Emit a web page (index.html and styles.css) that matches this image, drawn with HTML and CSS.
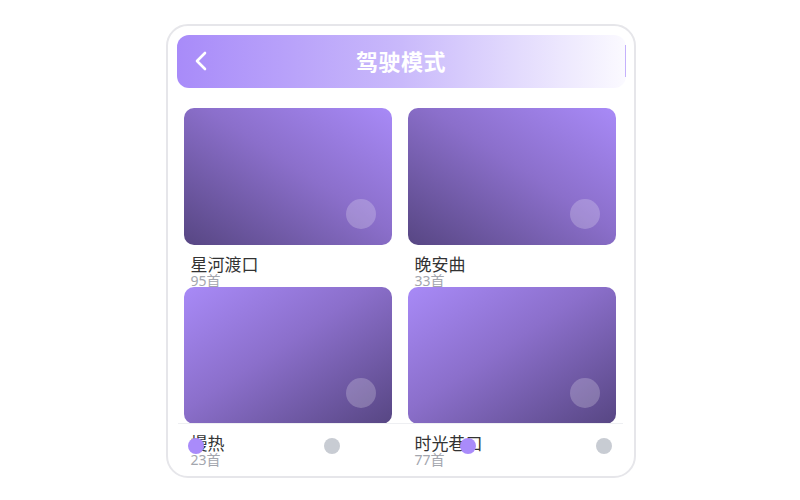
FILE: index.html
```html
<!DOCTYPE html>
<html lang="zh-CN">
<head>
  <meta charset="UTF-8">
  <meta name="viewport" content="width=device-width, initial-scale=1.0">
  <title>驾驶模式</title>
  <link rel="stylesheet" href="styles.css">
</head>
<body>
  <div class="phone">
    <div class="header">
      <span class="back">
        <svg width="14" height="22" viewBox="0 0 14 22"><path d="M11 3 L3 11 L11 19" fill="none" stroke="#fff" stroke-width="2.6" stroke-linecap="round" stroke-linejoin="round"/></svg>
      </span>
      <h1>驾驶模式</h1>
    </div>

    <div class="grid">
      <div class="item">
        <div class="cover cover-up"><span class="play"></span></div>
        <p class="name">星河渡口</p>
        <p class="count">95首</p>
      </div>
      <div class="item">
        <div class="cover cover-up"><span class="play"></span></div>
        <p class="name">晚安曲</p>
        <p class="count">33首</p>
      </div>
      <div class="item">
        <div class="cover cover-down"><span class="play"></span></div>
        <p class="name">慢热</p>
        <p class="count">23首</p>
      </div>
      <div class="item">
        <div class="cover cover-down"><span class="play"></span></div>
        <p class="name">时光巷口</p>
        <p class="count">77首</p>
      </div>
    </div>

    <!-- 底部指示点 -->
    <div class="dots">
      <span class="dot on"></span>
      <span class="dot"></span>
      <span class="dot on"></span>
      <span class="dot"></span>
    </div>
  </div>
</body>
</html>
```

FILE: styles.css
```css
body {
  margin: 0;
  padding: 0 0 0 1px;
  background: #fff;
  font-family: "Noto Sans", "Noto Sans CJK SC", sans-serif;
}
.phone {
  position: relative;
  box-sizing: border-box;
  width: 470px;
  height: 454px;
  margin: 24px auto 0;
  padding: 9px 8px 0 9px;
  border: 2px solid #e6e6ea;
  border-radius: 22px;
  overflow: hidden;
}
.header {
  position: relative;
  display: flex;
  align-items: center;
  justify-content: center;
  box-sizing: border-box;
  height: 53px;
  padding-bottom: 3px;
  border-radius: 12px;
  background: linear-gradient(to right, #a88bf9, #c9b9fb 50%, #fbfaff);
}
.header::after {
  content: "";
  position: absolute;
  right: 0;
  top: 10px;
  width: 1px;
  height: 32px;
  background: #c4b1fc;
}
.back {
  position: absolute;
  left: 17px;
  top: 15px;
  display: flex;
}
.header h1 {
  margin: 0;
  font-size: 22px;
  font-weight: bold;
  color: #fff;
  letter-spacing: 0.5px;
}
.grid {
  display: grid;
  grid-template-columns: 208px 208px;
  grid-auto-rows: 179px;
  column-gap: 16px;
  margin: 20px 0 0 7px;
}
.item {
  min-width: 0;
}
.cover {
  position: relative;
  height: 137px;
  border-radius: 10px;
}
.cover-up {
  background: linear-gradient(to top right, #574683, #8b6fcb 55%, #a88af7);
}
.cover-down {
  background: linear-gradient(to bottom right, #a88af7, #8b6fcb 45%, #574683);
}
.play {
  position: absolute;
  right: 16px;
  bottom: 16px;
  width: 30px;
  height: 30px;
  border-radius: 50%;
  background: rgba(255, 255, 255, 0.22);
}
.name {
  margin: 10px 0 0 7px;
  font-size: 17px;
  line-height: 20px;
  color: #333;
}
.count {
  margin: -1px 0 0 7px;
  font-size: 14px;
  line-height: 14px;
  color: #a3a6ae;
}
.dots {
  position: absolute;
  left: 10px;
  right: 11px;
  bottom: 8px;
  height: 44px;
  display: flex;
  align-items: center;
  justify-content: space-between;
  padding: 0 10px;
  border-top: 1px solid #eeeff2;
}
.dot {
  width: 16px;
  height: 16px;
  border-radius: 50%;
  background: #c8ccd3;
}
.dot.on {
  background: #a98bfa;
}
```
